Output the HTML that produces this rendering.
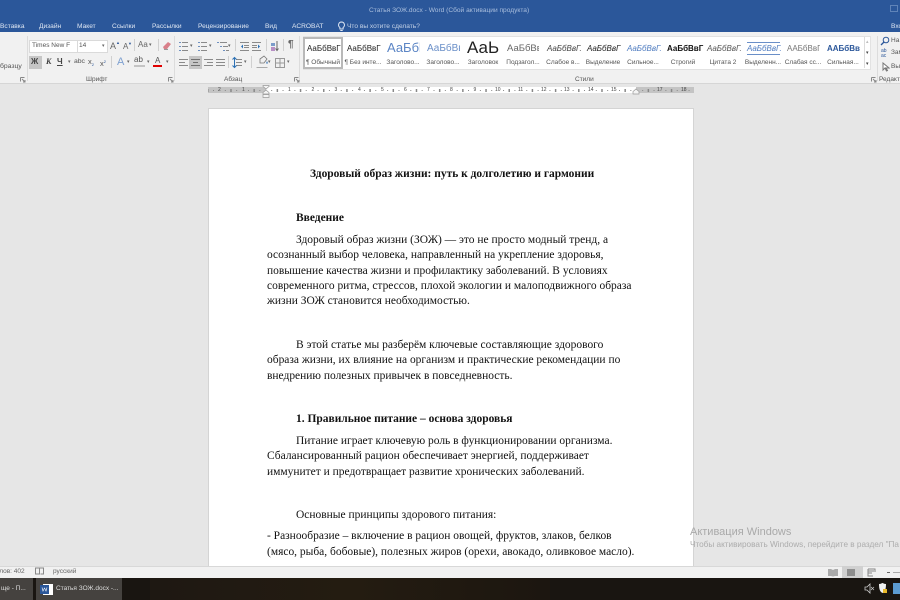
<!DOCTYPE html>
<html><head><meta charset="utf-8"><style>
html,body{margin:0;padding:0;width:900px;height:600px;overflow:hidden;background:#e6e6e6}
body{position:relative;font-family:"Liberation Sans","Noto Sans CJK SC",sans-serif}
div{position:absolute}
.t{position:absolute;white-space:nowrap;line-height:12px}
.tab{position:absolute;top:21px;font-size:6.6px;color:#dfe7f3;white-space:nowrap;line-height:12px}
.g{position:absolute;font-size:6.5px;color:#555;white-space:nowrap;line-height:10px}
.s{position:absolute;font-size:6.5px;color:#555;white-space:nowrap;line-height:9px;top:58px;text-align:center;width:60px}
.p{position:absolute;margin-top:1px;font-family:"Liberation Serif",serif;font-size:11.47px;line-height:14px;color:#111;white-space:nowrap}
.b{font-weight:bold}
.sv{position:absolute;left:0;top:0}
.ar{position:absolute;font-size:5px;color:#666;line-height:10px}
.n{position:absolute;top:0;line-height:6px;white-space:nowrap}
.y{top:43px}
</style></head><body>
<div style="left:0;top:0;width:900px;height:32px;background:#2b579a"></div>
<div class="t" style="left:369px;top:5px;font-size:6.6px;color:#a9bedd">Статья ЗОЖ.docx - Word (Сбой активации продукта)</div>
<div style="left:890px;top:5px;width:6px;height:5px;border:1px solid #5f83b8"></div>
<span class="tab" style="left:0">Вставка</span><span class="tab" style="left:39px">Дизайн</span><span class="tab" style="left:77px">Макет</span><span class="tab" style="left:112px">Ссылки</span><span class="tab" style="left:152px">Рассылки</span><span class="tab" style="left:198px">Рецензирование</span><span class="tab" style="left:265px">Вид</span><span class="tab" style="left:292px">ACROBAT</span><span class="tab" style="left:347px;color:#c3d1e6">Что вы хотите сделать?</span><span class="tab" style="left:891px">Вхо</span>
<svg class="sv" style="left:337px;top:21px" width="9" height="11" viewBox="0 0 9 11"><path d="M4.500 1a3 3 0 0 0-1.600 5.500V8h3.200V6.500A3 3 0 0 0 4.500 1zM3.300 9.500h2.400" fill="none" stroke="#dfe7f3"/></svg>

<!-- ribbon -->
<div style="left:0;top:32px;width:900px;height:51px;background:#f1f1f1;border-bottom:1px solid #d6d6d6"></div>
<div style="left:27px;top:36px;width:1px;height:45px;background:#dcdcdc"></div>
<div style="left:174px;top:36px;width:1px;height:45px;background:#dcdcdc"></div>
<div style="left:299px;top:36px;width:1px;height:45px;background:#dcdcdc"></div>
<div style="left:877px;top:36px;width:1px;height:45px;background:#dcdcdc"></div>
<span class="g" style="left:0;top:62px;font-size:6.800px">бразцу</span>

<div style="left:29px;top:40px;width:47px;height:11px;background:#fff;border:1px solid #dadada"></div>
<span class="t" style="left:32px;top:40px;font-size:6.500px;color:#555">Times New F</span>
<div style="left:77px;top:40px;width:29px;height:11px;background:#fff;border:1px solid #dadada"></div>
<span class="t" style="left:79px;top:40px;font-size:6.500px;color:#555">14</span>
<span class="ar" style="left:102px;top:41px">▾</span>
<span class="t" style="left:110px;top:40px;font-size:9px;color:#666">A<span style="position:absolute;left:6px;top:-3px;font-size:4px;color:#2b579a">▲</span></span>
<span class="t" style="left:123px;top:41px;font-size:8px;color:#666">A<span style="position:absolute;left:5px;top:-3px;font-size:4px;color:#2b579a">▼</span></span>
<div style="left:134px;top:39px;width:1px;height:12px;background:#d0d0d0"></div>
<span class="t" style="left:138px;top:39px;font-size:8px;color:#666">Aa</span><span class="ar" style="left:149px;top:40px">▾</span>
<div style="left:158px;top:39px;width:1px;height:12px;background:#d0d0d0"></div>
<svg class="sv" style="left:161px;top:40px" width="12" height="11"><path d="M2 7L7 2l3 2-4 5H3z" fill="#d9808a"/><path d="M3 9.500h4" stroke="#999"/></svg>

<div style="left:29px;top:56px;width:13px;height:13px;background:#c6c6c6"></div>
<span class="t" style="left:31px;top:56px;font-size:8px;color:#444;font-weight:bold">Ж</span>
<span class="t" style="left:46px;top:56px;font-size:8px;color:#444;font-style:italic;font-family:'Liberation Serif',serif;font-weight:bold">К</span>
<span class="t" style="left:57px;top:56px;font-size:8px;color:#444;font-weight:bold;text-decoration:underline">Ч</span><span class="ar" style="left:68px;top:57px">▾</span>
<span class="t" style="left:74px;top:56px;font-size:6.800px;color:#555">abc</span>
<span class="t" style="left:88px;top:56px;font-size:7.500px;color:#555">x<span style="font-size:4px;color:#2b579a;vertical-align:-2px">2</span></span>
<span class="t" style="left:100px;top:56px;font-size:7.500px;color:#555">x<span style="font-size:4px;color:#2b579a;vertical-align:3px">2</span></span>
<div style="left:111px;top:56px;width:1px;height:12px;background:#d0d0d0"></div>
<span class="t" style="left:117px;top:56px;font-size:11px;color:#7ea0d0">A</span><span class="ar" style="left:127px;top:57px">▾</span>
<span class="t" style="left:134px;top:54px;font-size:8px;color:#555">ab</span><div style="left:134px;top:65px;width:11px;height:2px;background:#c4c4c4"></div><span class="ar" style="left:147px;top:57px">▾</span>
<span class="t" style="left:155px;top:55px;font-size:8px;color:#555">A</span><div style="left:153px;top:65px;width:9px;height:2px;background:#e00000"></div><span class="ar" style="left:166px;top:57px">▾</span>

<!-- paragraph group -->
<div style="left:189px;top:56px;width:13px;height:13px;background:#c6c6c6"></div>
<svg class="sv" width="300" height="84" style="left:0;top:0">
<g stroke="#6e90c0" fill="none">
<path d="M179 42.500h2M179 46.500h2M179 50.500h2M198 42.500h2M198 46.500h2M198 50.500h2M217 42.500h2M220 46.500h2M223 50.500h2"/>
</g>
<g stroke="#8a8a8a" fill="none">
<path d="M182 42.500h6M182 46.500h6M182 50.500h6M201 42.500h6M201 46.500h6M201 50.500h6M220 42.500h7M223 46.500h5M226 50.500h3"/>
<path d="M240 42.500h9M244 45.500h5M244 47.500h5M240 50.500h9M252 42.500h9M252 45.500h5M252 47.500h5M252 50.500h9"/>
<path d="M179 59.500h9M179 62.500h6M179 65.500h9"/>
<path d="M191 59.500h9M193 62.500h5M191 65.500h9" stroke="#707070"/>
<path d="M204 59.500h9M207 62.500h6M204 65.500h9"/>
<path d="M216 59.500h9M216 62.500h9M216 65.500h9"/>
<path d="M236 59.500h6M236 62.500h6M236 65.500h6"/>
</g>
<path d="M241 46.500l2-2v4zM260 46.500l-2-2v4z" fill="#2b70b5"/>
<path d="M234.500 58v9M232.500 59.500l2-2 2 2M232.500 65.500l2 2 2-2" fill="none" stroke="#2b70b5"/>
<path d="M271 43h4v3h-4z" fill="#7a9cc9"/><path d="M271 47h4v4h-4z" fill="#b78fc4"/>
<path d="M277 41v9M275.500 48.500l1.500 2 1.500-2" fill="none" stroke="#666"/>
<path d="M260 59l4-3 3 3-3 4h-4z" fill="#f0f0f0" stroke="#777" stroke-width=".8"/>
<path d="M267 61l1 2-1 1-1-1z" fill="#5a8ac0"/>
<path d="M256.500 67.500h11" stroke="#aaa" stroke-width="1"/>
<path d="M275.500 58.500h9v9h-9zM280 58.500v9M275.500 63h9" fill="none" stroke="#999"/>
</svg>
<div style="left:235px;top:39px;width:1px;height:12px;background:#d0d0d0"></div>
<div style="left:266px;top:39px;width:1px;height:12px;background:#d0d0d0"></div>
<div style="left:283px;top:39px;width:1px;height:12px;background:#d0d0d0"></div>
<div style="left:228px;top:56px;width:1px;height:12px;background:#d0d0d0"></div>
<div style="left:251px;top:56px;width:1px;height:12px;background:#d0d0d0"></div>
<span class="t" style="left:288px;top:39px;font-size:10px;color:#666;font-weight:bold">¶</span>
<span class="ar" style="left:190px;top:41px">▾</span><span class="ar" style="left:209px;top:41px">▾</span><span class="ar" style="left:228px;top:41px">▾</span>
<span class="ar" style="left:244px;top:57px">▾</span><span class="ar" style="left:268px;top:57px">▾</span><span class="ar" style="left:287px;top:57px">▾</span>

<span class="g" style="left:86px;top:75px">Шрифт</span>
<span class="g" style="left:224px;top:75px">Абзац</span>
<span class="g" style="left:575px;top:75px">Стили</span>
<span class="g" style="left:879px;top:75px">Редакти</span>
<svg class="sv" style="left:20px;top:77px" width="6" height="6"><path d="M.500.500h4M.500.500v4M2 2l3 3M5 3v2H3" fill="none" stroke="#888"/></svg>
<svg class="sv" style="left:168px;top:77px" width="6" height="6"><path d="M.500.500h4M.500.500v4M2 2l3 3M5 3v2H3" fill="none" stroke="#888"/></svg>
<svg class="sv" style="left:294px;top:77px" width="6" height="6"><path d="M.500.500h4M.500.500v4M2 2l3 3M5 3v2H3" fill="none" stroke="#888"/></svg>
<svg class="sv" style="left:871px;top:77px" width="6" height="6"><path d="M.500.500h4M.500.500v4M2 2l3 3M5 3v2H3" fill="none" stroke="#888"/></svg>

<!-- styles gallery -->
<div style="left:303px;top:36px;width:566px;height:32px;background:#fff;border:1px solid #e2e2e2"></div>
<div style="left:303px;top:37px;width:36px;height:28px;border:2px solid #b9b9b9;background:#fff"></div>
<div style="left:864px;top:37px;width:1px;height:31px;background:#dcdcdc"></div>
<span class="ar" style="left:866px;top:37px;color:#bbb">▴</span><span class="ar" style="left:866px;top:48px;color:#444">▾</span><span class="ar" style="left:866px;top:59px;color:#444">▾</span>

<span class="t y" style="left:307px;font-size:8px;color:#222">АаБбВвГ</span>
<span class="t y" style="left:347px;font-size:8px;color:#222">АаБбВвГ</span>
<span class="t" style="left:387px;top:42px;font-size:13px;color:#5b85c5;width:33px;overflow:hidden">АаБбl</span>
<span class="t y" style="left:427px;font-size:10px;color:#6a8fc8;width:33px;overflow:hidden">АаБбВв</span>
<span class="t" style="left:467px;top:40px;font-size:17px;line-height:16px;color:#222">АаЬ</span>
<span class="t y" style="left:507px;font-size:9.500px;color:#666;width:32px;overflow:hidden">АаБбВв</span>
<span class="t y" style="left:547px;font-size:8px;color:#444;font-style:italic">АаБбВвГ.</span>
<span class="t y" style="left:587px;font-size:8px;color:#222;font-style:italic">АаБбВвГ</span>
<span class="t y" style="left:627px;font-size:8px;color:#4f7cc0;font-style:italic">АаБбВвГ.</span>
<span class="t y" style="left:667px;font-size:8px;color:#111;font-weight:bold">АаБбВвГ</span>
<span class="t y" style="left:707px;font-size:8px;color:#555;font-style:italic">АаБбВвГ.</span>
<div style="left:747px;top:42px;width:33px;height:11px;border-top:1px solid #6a8fc8;border-bottom:1px solid #6a8fc8"></div>
<span class="t y" style="left:747px;font-size:8px;color:#4f7cc0;font-style:italic">АаБбВвГ.</span>
<span class="t y" style="left:787px;font-size:8px;color:#777;width:33px;overflow:hidden">ААБбВвГг</span>
<span class="t y" style="left:827px;font-size:8px;color:#2b579a;font-weight:bold;width:33px;overflow:hidden">ААБбВвГг</span>

<span class="s" style="left:293px">¶ Обычный</span>
<span class="s" style="left:333px">¶ Без инте...</span>
<span class="s" style="left:373px">Заголово...</span>
<span class="s" style="left:413px">Заголово...</span>
<span class="s" style="left:453px">Заголовок</span>
<span class="s" style="left:493px">Подзагол...</span>
<span class="s" style="left:533px">Слабое в...</span>
<span class="s" style="left:573px">Выделение</span>
<span class="s" style="left:613px">Сильное...</span>
<span class="s" style="left:653px">Строгий</span>
<span class="s" style="left:693px">Цитата 2</span>
<span class="s" style="left:733px">Выделенн...</span>
<span class="s" style="left:773px">Слабая сс...</span>
<span class="s" style="left:813px">Сильная...</span>

<svg class="sv" style="left:880px;top:36px" width="11" height="10"><circle cx="6" cy="4" r="2.800" fill="none" stroke="#2b579a"/><path d="M4 6L1 9" stroke="#2b579a" stroke-width="1.300"/></svg>
<span class="t" style="left:891px;top:35px;font-size:6.500px;color:#555">На</span>
<span class="t" style="left:881px;top:49px;font-size:5px;color:#2b579a;line-height:5px">ab<br>ac</span>
<span class="t" style="left:891px;top:47px;font-size:6.500px;color:#555">Зам</span>
<svg class="sv" style="left:882px;top:62px" width="8" height="10"><path d="M1 1v7l2-2 1.500 3 1-.500L4 6h3z" fill="#fff" stroke="#777"/></svg>
<span class="t" style="left:891px;top:61px;font-size:6.500px;color:#555">Вы</span>

<!-- ruler -->
<div style="left:208px;top:87px;width:486px;height:6px;background:#c4c4c4"></div>
<div style="left:266px;top:87px;width:370px;height:6px;background:#fff"></div>
<div style="left:208px;top:89.500px;width:486px;height:1px;background:linear-gradient(90deg,transparent 5.300px,#888 5.300px,#888 6.300px,transparent 6.300px,transparent 17px,#888 17px,#888 18px,transparent 18px);background-size:23.200px 1px;background-position:11.400px 0"></div>
<div style="left:208px;top:88.500px;width:486px;height:3px;background:linear-gradient(90deg,transparent 11.100px,#888 11.100px,#888 12.100px,transparent 12.100px);background-size:23.200px 3px;background-position:11.400px 0"></div>
<div style="left:208px;top:87px;width:486px;height:6px;font-size:5px;color:#444"><span class="n" style="left:10px">2</span><span class="n" style="left:34px">1</span><span class="n" style="left:80px">1</span><span class="n" style="left:103.500px">2</span><span class="n" style="left:126.500px">3</span><span class="n" style="left:150px">4</span><span class="n" style="left:173px">5</span><span class="n" style="left:196px">6</span><span class="n" style="left:219px">7</span><span class="n" style="left:242px">8</span><span class="n" style="left:265.500px">9</span><span class="n" style="left:287px">10</span><span class="n" style="left:310px">11</span><span class="n" style="left:333px">12</span><span class="n" style="left:356px">13</span><span class="n" style="left:380px">14</span><span class="n" style="left:403px">15</span><span class="n" style="left:449px">17</span><span class="n" style="left:473px">18</span></div>
<svg class="sv" style="left:262px;top:85px" width="9" height="13"><path d="M1 .500h6v1L4 4 1 1.500zM4 5l3 2.500v1.500H1V7.500zM1 9.500h6v3H1z" fill="#f4f4f4" stroke="#999" stroke-width=".7"/></svg>
<svg class="sv" style="left:632px;top:88px" width="8" height="7"><path d="M1 6V3.500L4 1l3 2.500V6z" fill="#f4f4f4" stroke="#999" stroke-width=".7"/></svg>

<!-- page -->
<div style="left:208px;top:108px;width:486px;height:460px;background:#fff;border:1px solid #d4d4d4;border-bottom:0;box-sizing:border-box"></div>
<div class="p b" style="left:310px;top:166px">Здоровый образ жизни: путь к долголетию и гармонии</div>
<div class="p b" style="left:296px;top:210px">Введение</div>
<div class="p" style="left:296px;top:232px">Здоровый образ жизни (ЗОЖ) — это не просто модный тренд, а</div>
<div class="p" style="left:267px;top:247px">осознанный выбор человека, направленный на укрепление здоровья,</div>
<div class="p" style="left:267px;top:263px">повышение качества жизни и профилактику заболеваний. В условиях</div>
<div class="p" style="left:267px;top:278px">современного ритма, стрессов, плохой экологии и малоподвижного образа</div>
<div class="p" style="left:267px;top:293px">жизни ЗОЖ становится необходимостью.</div>
<div class="p" style="left:296px;top:337px">В этой статье мы разберём ключевые составляющие здорового</div>
<div class="p" style="left:267px;top:352px">образа жизни, их влияние на организм и практические рекомендации по</div>
<div class="p" style="left:267px;top:368px">внедрению полезных привычек в повседневность.</div>
<div class="p b" style="left:296px;top:411px">1. Правильное питание – основа здоровья</div>
<div class="p" style="left:296px;top:433px">Питание играет ключевую роль в функционировании организма.</div>
<div class="p" style="left:267px;top:448px">Сбалансированный рацион обеспечивает энергией, поддерживает</div>
<div class="p" style="left:267px;top:464px">иммунитет и предотвращает развитие хронических заболеваний.</div>
<div class="p" style="left:296px;top:507px">Основные принципы здорового питания:</div>
<div class="p" style="left:267px;top:528px">- Разнообразие – включение в рацион овощей, фруктов, злаков, белков</div>
<div class="p" style="left:267px;top:544px">(мясо, рыба, бобовые), полезных жиров (орехи, авокадо, оливковое масло).</div>

<!-- watermark -->
<div class="t" style="left:690px;top:526px;font-size:11px;line-height:13px;color:#a9a9a9">Активация Windows</div>
<div class="t" style="left:690px;top:540px;font-size:8.200px;line-height:10px;color:#acacac">Чтобы активировать Windows, перейдите в раздел "Па</div>

<!-- status bar -->
<div style="left:0;top:566px;width:900px;height:12px;background:#f1f1f1;border-top:1px solid #d8d8d8;box-sizing:border-box"></div>
<span class="t" style="left:-4px;top:566px;font-size:6.500px;color:#666">слов: 402</span>
<svg class="sv" style="left:35px;top:567px" width="9" height="9"><path d="M.500 1h4v6h-4zM4.500 1h4v6h-3" fill="none" stroke="#888"/></svg>
<span class="t" style="left:53px;top:566px;font-size:6.500px;color:#666">русский</span>
<div style="left:842px;top:566px;width:21px;height:12px;background:#d0d0d0"></div>
<svg class="sv" style="left:827px;top:567px" width="60" height="11"><path d="M1 2h3l2 1 2-1h3v7H8L6 9.500 4 9H1z" fill="#aaa"/><rect x="20" y="2" width="8" height="7" fill="#8e8e8e"/><path d="M41 2h7v3M41 2v7h5M41 4h6M41 6h4" fill="none" stroke="#888"/></svg>
<div style="left:887px;top:572px;width:3px;height:1px;background:#666"></div><div style="left:893px;top:572px;width:7px;height:1px;background:#aaa"></div>

<!-- taskbar -->
<div style="left:0;top:578px;width:900px;height:22px;background:#191511"></div>
<div style="left:150px;top:578px;width:400px;height:22px;background:linear-gradient(90deg,#1e1812,#241c11,#1c1610)"></div>
<div style="left:0;top:578px;width:33px;height:22px;background:#45423f"></div>
<div style="left:36px;top:578px;width:86px;height:22px;background:#45423f"></div>
<span class="t" style="left:1px;top:583px;font-size:6.500px;color:#ddd">ще - П...</span>
<svg class="sv" style="left:40px;top:584px" width="13" height="11"><rect x="3" y="0" width="10" height="11" fill="#fff"/><rect x="0" y="1" width="9" height="9" fill="#2b579a"/><path d="M2 3.500l1 3.500 1.500-3 1.500 3 1-3.500" fill="none" stroke="#fff" stroke-width=".6"/></svg>
<span class="t" style="left:56px;top:583px;font-size:6.500px;color:#ddd">Статья ЗОЖ.docx -...</span>
<svg class="sv" style="left:864px;top:582px" width="36" height="14"><path d="M1 5h2l3-3v9L3 8H1z" fill="none" stroke="#ccc" stroke-width=".8"/><path d="M7 5l3 3M10 5L7 8" stroke="#ccc" stroke-width=".7"/><path d="M15 2c2 0 3-1 3.500-1S20 2 22 2c0 5-1 8-3.500 9C16 10 15 7 15 2z" fill="#f2f2f2"/><rect x="19" y="7" width="4" height="4" fill="#e8b82a"/><rect x="29" y="1" width="7" height="11" fill="#5c9bd1"/></svg>
</body></html>
